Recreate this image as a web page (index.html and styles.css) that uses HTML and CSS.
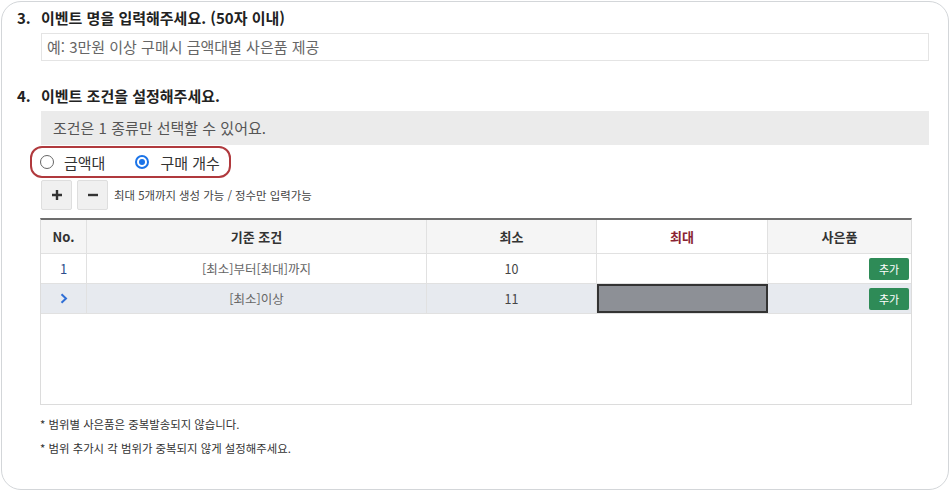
FILE: index.html
```html
<!DOCTYPE html>
<html lang="ko">
<head>
<meta charset="utf-8">
<link rel="stylesheet" href="styles.css">
</head>
<body>
<div class="card">
  <section class="sec">
    <h2 class="title"><span class="num">3.</span>이벤트 명을 입력해주세요. (50자 이내)</h2>
    <div class="input">예: 3만원 이상 구매시 금액대별 사은품 제공</div>
  </section>
  <section class="sec sec4">
    <h2 class="title"><span class="num">4.</span>이벤트 조건을 설정해주세요.</h2>
    <div class="notice">조건은 1 종류만 선택할 수 있어요.</div>
    <div class="radios">
      <label class="radio"><span class="dot"></span>금액대</label>
      <label class="radio on"><span class="dot"></span>구매 개수</label>
    </div>
    <div class="tools">
      <button class="btn">
        <svg width="12" height="12" viewBox="0 0 12 12"><path d="M6 1v10M1 6h10" stroke="#333" stroke-width="2.4"/></svg>
      </button>
      <button class="btn">
        <svg width="12" height="12" viewBox="0 0 12 12"><path d="M1 6h10" stroke="#333" stroke-width="2.4"/></svg>
      </button>
      <span class="hint">최대 5개까지 생성 가능 / 정수만 입력가능</span>
    </div>
    <div class="grid">
      <div class="row head">
        <div class="c c1">No.</div>
        <div class="c c2">기준 조건</div>
        <div class="c c3">최소</div>
        <div class="c c4 red">최대</div>
        <div class="c c5">사은품</div>
      </div>
      <div class="row">
        <div class="c c1 blue">1</div>
        <div class="c c2 gray">[최소]부터[최대]까지</div>
        <div class="c c3">10</div>
        <div class="c c4"></div>
        <div class="c c5 right"><span class="add">추가</span></div>
      </div>
      <div class="row sel">
        <div class="c c1 blue">
          <svg width="8" height="11" viewBox="0 0 8 11"><path d="M1.5 1.2 L6 5.5 L1.5 9.8" fill="none" stroke="#2f6fd6" stroke-width="2"/></svg>
        </div>
        <div class="c c2 gray">[최소]이상</div>
        <div class="c c3">11</div>
        <div class="c c4 active"></div>
        <div class="c c5 right"><span class="add">추가</span></div>
      </div>
    </div>
    <p class="note">* 범위별 사은품은 중복발송되지 않습니다.</p>
    <p class="note">* 범위 추가시 각 범위가 중복되지 않게 설정해주세요.</p>
  </section>
</div>
</body>
</html>
```
FILE: styles.css
```css
* { box-sizing: border-box; }
html, body { margin: 0; padding: 0; background: #fff; }
body {
  font-family: "Noto Sans CJK KR", "Noto Sans", sans-serif;
  color: #222;
}
.card {
  margin: 1px 0 0 1px;
  width: 948px;
  height: 489px;
  border: 1px solid #d3d6d9;
  border-radius: 20px;
  padding: 7px 19px 0 15px;
}
.sec { display: flex; flex-direction: column; }
.title {
  margin: 0;
  font-size: 15px;
  font-weight: 700;
  line-height: 18px;
  display: flex;
  color: #222;
}
.num { width: 24px; flex: none; }
.input {
  margin: 6px 0 0 24px;
  height: 28px;
  border: 1px solid #e4e4e4;
  font-size: 15px;
  line-height: 26px;
  padding-left: 5px;
  color: #666;
}
.sec4 { margin-top: 26px; }
.notice {
  margin: 6px 0 0 24px;
  height: 34px;
  background: #ebebeb;
  font-size: 15px;
  line-height: 34px;
  padding-left: 12px;
  color: #555;
}
.radios {
  margin: 1px 0 0 13px;
  width: 201px;
  height: 32px;
  border: 2px solid #b0393d;
  border-radius: 12px;
  display: flex;
  align-items: center;
  padding-left: 8px;
  gap: 30px;
}
.radio {
  display: flex;
  align-items: center;
  gap: 10px;
  font-size: 15px;
  color: #333;
}
.radio.on { gap: 11px; }
.dot {
  width: 14px;
  height: 14px;
  border-radius: 50%;
  border: 1px solid #666;
  background: #fff;
  position: relative;
}
.radio.on .dot { border: 2px solid #1a73e8; }
.radio.on .dot::after {
  content: "";
  position: absolute;
  left: 2px; top: 2px;
  width: 6px; height: 6px;
  border-radius: 50%;
  background: #1a73e8;
}
.tools {
  margin: 2px 0 0 24px;
  display: flex;
  align-items: center;
  gap: 5px;
  height: 30px;
}
.btn {
  width: 31px;
  height: 30px;
  padding: 0;
  border: 1px solid #dedede;
  border-radius: 2px;
  background: #f0f0f0;
  display: flex;
  align-items: center;
  justify-content: center;
}
.hint { font-size: 11.4px; color: #444; margin-left: 1px; }
.grid {
  margin: 8px 0 0 23px;
  width: 872px;
  height: 187px;
  border: 1px solid #dcdcdc;
  border-top: 2px solid #6d6d6d;
}
.row {
  display: grid;
  grid-template-columns: 46px 340px 170px 171px 1fr;
  height: 30px;
  border-bottom: 1px solid #e1e1e1;
}
.row.head { height: 34px; background: #f5f5f5; }
.row.sel { background: #e7eaef; }
.c {
  border-right: 1px solid #e1e1e1;
  display: flex;
  align-items: center;
  justify-content: center;
  font-size: 12.5px;
  color: #444;
}
.c5 { border-right: none; }
.head .c { font-weight: 700; color: #333; font-size: 13px; }
.head .c4 { background: #fff; color: #8a2433; }
.c1.blue { color: #2c4c8c; font-size: 13px; }
.gray { color: #666; }
.right { justify-content: flex-end; padding-right: 2px; }
.add {
  width: 40px;
  height: 22px;
  background: #2e8b57;
  color: #fff;
  font-size: 11px;
  border-radius: 2px;
  display: flex;
  align-items: center;
  justify-content: center;
}
.active {
  background: #8d9096;
  border: 2px solid #333;
}
.note {
  margin: 11px 0 0 23px;
  font-size: 11.4px;
  color: #333;
  line-height: 16px;
}
.note + .note { margin-top: 8px; }
```
